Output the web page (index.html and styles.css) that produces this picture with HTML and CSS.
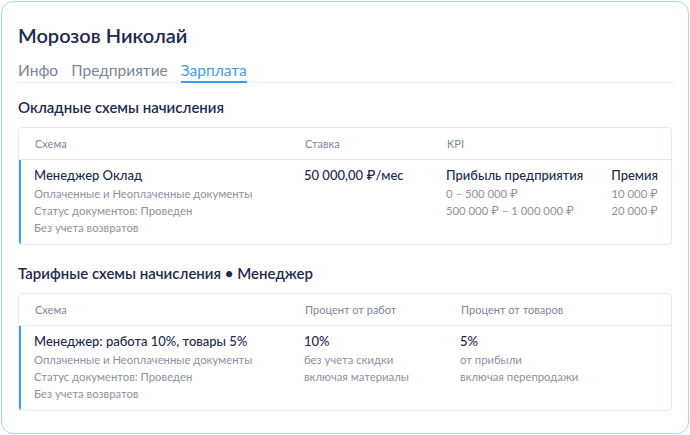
FILE: index.html
```html
<!DOCTYPE html>
<html lang="ru">
<head>
<meta charset="utf-8">
<link rel="stylesheet" href="styles.css">
</head>
<body>
<div class="card">
  <h1 class="name">Морозов Николай</h1>
  <nav class="tabs">
    <span class="tab">Инфо</span>
    <span class="tab">Предприятие</span>
    <span class="tab active">Зарплата</span>
  </nav>

  <h2 class="section">Окладные схемы начисления</h2>
  <div class="table t1">
    <div class="row head">
      <div class="c1">Схема</div>
      <div class="c2">Ставка</div>
      <div class="c3">KPI</div>
    </div>
    <div class="row body">
      <div class="c1">
        <div class="main">Менеджер Оклад</div>
        <div class="sub">Оплаченные и Неоплаченные документы</div>
        <div class="sub">Статус документов: Проведен</div>
        <div class="sub">Без учета возвратов</div>
      </div>
      <div class="c2"><div class="main">50 000,00 ₽/мес</div></div>
      <div class="c3 kpi">
        <div class="kpi-col">
          <div class="main">Прибыль предприятия</div>
          <div class="sub">0 – 500 000 ₽</div>
          <div class="sub">500 000 ₽ – 1 000 000 ₽</div>
        </div>
        <div class="kpi-col right">
          <div class="main">Премия</div>
          <div class="sub">10 000 ₽</div>
          <div class="sub">20 000 ₽</div>
        </div>
      </div>
    </div>
  </div>

  <h2 class="section s2">Тарифные схемы начисления • Менеджер</h2>
  <div class="table t2">
    <div class="row head">
      <div class="c1">Схема</div>
      <div class="c2">Процент от работ</div>
      <div class="c3">Процент от товаров</div>
    </div>
    <div class="row body">
      <div class="c1">
        <div class="main">Менеджер: работа 10%, товары 5%</div>
        <div class="sub">Оплаченные и Неоплаченные документы</div>
        <div class="sub">Статус документов: Проведен</div>
        <div class="sub">Без учета возвратов</div>
      </div>
      <div class="c2">
        <div class="main">10%</div>
        <div class="sub">без учета скидки</div>
        <div class="sub">включая материалы</div>
      </div>
      <div class="c3">
        <div class="main">5%</div>
        <div class="sub">от прибыли</div>
        <div class="sub">включая перепродажи</div>
      </div>
    </div>
  </div>
</div>
</body>
</html>
```
FILE: styles.css
```css
* { box-sizing: border-box; }
html, body { margin: 0; padding: 0; background: #ffffff; }
body {
  font-family: Lato, Inter, "Noto Sans", "Liberation Sans", sans-serif;
  color: #1c2a4e;
  padding: 1px;
}
.card {
  width: 688px;
  height: 433px;
  border: 1px solid #a9d3f7;
  border-radius: 12px;
  padding: 20px 16px 0 16px;
  background: #fff;
}
.name {
  margin: 0;
  font-size: 20px;
  font-weight: 600;
  line-height: 26px;
  color: #1c2a4e;
}
.tabs {
  display: flex;
  gap: 13px;
  margin-top: 12px;
  border-bottom: 1px solid #e6f0fa;
  margin-right: -3px;
}
.tab {
  font-size: 15.5px;
  line-height: 20px;
  padding-bottom: 1px;
  color: #7b8593;
  border-bottom: 2px solid transparent;
  margin-bottom: -1px;
}
.tab.active {
  color: #3d9bf2;
  border-bottom-color: #3d9bf2;
}
.section {
  margin: 14px 0 0 0;
  font-size: 15px;
  font-weight: 600;
  line-height: 20px;
  color: #1c2a4e;
}
.section.s2 { margin-top: 18px; }
.table {
  margin-top: 10px;
  border: 1px solid #e1ebf6;
  border-radius: 4px;
  overflow: hidden;
}
.row {
  display: grid;
  grid-template-columns: 270px 142px 1fr;
  padding-left: 16px;
  padding-right: 13px;
}
.t2 .row { grid-template-columns: 270px 156px 1fr; }
.row.head {
  height: 32px;
  align-items: center;
  font-size: 11px;
  color: #7d8896;
  border-bottom: 1px solid #e1ebf6;
}
.row.body {
  border-left: 3px solid #3d9bf2;
  padding-left: 13px;
  padding-top: 7px;
  padding-bottom: 8px;
  margin-left: -1px;
}
.main {
  font-size: 13px;
  line-height: 17px;
  font-weight: 500;
  color: #1c2a4e;
  margin-bottom: 1px;
}
.sub {
  font-size: 11.3px;
  line-height: 17px;
  color: #8a93a0;
}
.kpi {
  display: flex;
  justify-content: space-between;
}
.kpi-col.right { text-align: right; }
```
